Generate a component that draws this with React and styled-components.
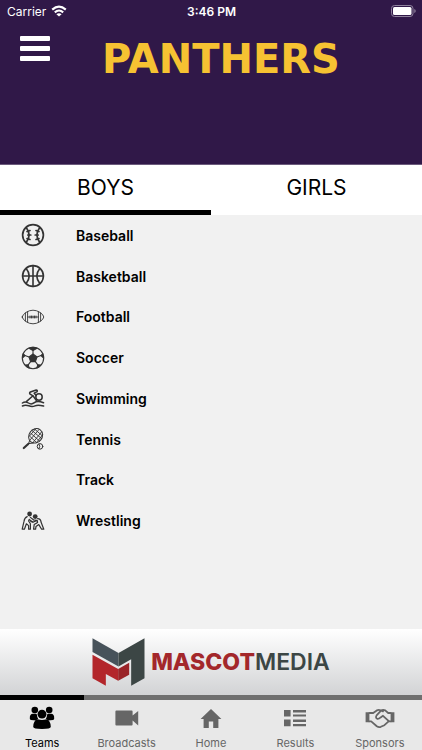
import React, { useState } from "react";
import styled, { createGlobalStyle } from "styled-components";

const purple = "#301848";

const stroke = {
  fill: "none",
  stroke: "currentColor",
  strokeLinecap: "round",
  strokeLinejoin: "round",
};

const BaseballIcon = () => (
  <svg viewBox="0 0 24 24" {...stroke} strokeWidth="1.7">
    <circle cx="12" cy="12" r="10.4" />
    <path d="M5.2 4.6Q11 12 5.2 19.4M18.8 4.6Q13 12 18.8 19.4" />
    <path d="M6 8.5l3-1M6.8 12h3M6 15.5l3 1M18 8.5l-3-1M17.2 12h-3M18 15.5l-3 1" />
  </svg>
);

const BasketballIcon = () => (
  <svg viewBox="0 0 24 24" {...stroke} strokeWidth="1.6">
    <circle cx="12" cy="12" r="10.4" />
    <path d="M12 1.6v20.8M1.6 12h20.8M5.2 4.6q6 7.4 0 14.8M18.8 4.6q-6 7.4 0 14.8" />
  </svg>
);

const FootballIcon = () => (
  <svg viewBox="0 0 24 24" {...stroke} strokeWidth="0.9">
    <path d="M1.200 12Q1.600 9.600 5 7.400T12 5.200t7 2.200 3.800 4.600q-.4 2.400-3.800 4.600T12 18.800t-7-2.200T1.200 12z" />
    <path d="M4.400 8v8M6.600 6.800v10.400M17.400 6.800v10.400M19.600 8v8M6.600 12h10.800" />
    <path d="M9 11v2M10.500 11v2M12 11v2M13.500 11v2M15 11v2" />
  </svg>
);

const SoccerIcon = () => (
  <svg viewBox="0 0 24 24" {...stroke} strokeWidth="1.100">
    <circle cx="12" cy="12" r="10.700" />
    <path d="M12 8V4.500M8 11L4 9.600M16 11l4-1.400M9.600 15.600l-2.400 3.200M14.400 15.600l2.400 3.200" />
    <g fill="currentColor">
      <path d="M12 8l4 3-1.600 4.600H9.600L8 11z" />
      <path d="M8 2.300Q12 .5 16 2.300l-4 2.200zM1.400 12l.8-4.400L4 9.600zM22.600 12l-.8-4.400L20 9.600zM4.200 19l3-.2 1 3.200Q6 21.200 4.200 19zM19.800 19l-3-.2-1 3.200q2.200-.8 4-3z" />
    </g>
  </svg>
);

const SwimmingIcon = () => (
  <svg viewBox="0 0 24 24" {...stroke} strokeWidth="1.500">
    <circle cx="18" cy="11" r="3.200" />
    <path d="M5.600 15.400l6.400-5.600-3.200-2q-.6-1.200.6-1.800l5.800-2q1.400.2 1 1.600l-3 1.600 1.800 2.200M12 9.800l3.400 4.800" />
    <path d="M1.400 17q3-2 6 0t6-.4 9.200.2M1.400 20q3-1.600 6.400-.2t6.200 0 8.600.2" />
  </svg>
);

const TennisIcon = () => (
  <svg viewBox="0 0 24 24" {...stroke} strokeWidth="1">
    <ellipse cx="14.600" cy="8.800" rx="6.600" ry="7.600" transform="rotate(38 14.600 8.800)" />
    <path
      d="M11 3.500l9.500 8M9.500 6l9 8M8.500 9l7 6.500M13.500 2l7.500 6.500M18 2.500L9 13M20.500 5L12 15.500M14.500 2L8.500 9M21.500 8l-6 7.500"
      strokeWidth="0.900"
    />
    <path d="M8.600 13.600l-1 3M12.400 16l-4.800.6" />
    <path d="M7.200 17l-4.400 4" strokeWidth="2.200" />
    <circle cx="19" cy="19.400" r="2.800" />
    <path d="M18 17.200q1.800 2.200 0 4.400" />
  </svg>
);

const WrestlingIcon = () => (
  <svg viewBox="0 0 24 24" {...stroke} strokeWidth="1.200">
    <g fill="currentColor" stroke="none">
      <circle cx="8.600" cy="5" r="2.400" />
      <circle cx="14.200" cy="7.600" r="2.400" />
    </g>
    <path d="M6.200 7.600Q3.400 8.800 3 12.400l-1.800 7.800h2.200l2-5.400 2.200 1.800v3.600h1.800v-5.400L7.600 12l.6-1.600 3.800 2.800M9.400 8.400l3 2.400" />
    <path d="M16.600 9.600q3.200.2 3.400 3.400l2.800 7.200h-2.200l-2.800-4.600-2.800 1.800-.4 2.800h-2l.6-4.600 3.400-2.200-.4-2-3.800 1.600-2.600-.4M13 11l3 .4" />
  </svg>
);

const TeamsIcon = () => (
  <svg width="26" height="24" viewBox="0 0 26 24" fill="currentColor">
    <circle cx="5.800" cy="4" r="3.300" />
    <circle cx="20.200" cy="4" r="3.300" />
    <path d="M.8 12.400Q.6 7.800 4 7.800h3q1 .2 1 1.400.1 2.200 1.200 3.400L7 14.400l-5-.4q-1.200-.4-1.200-1.600zM25.200 12.400q.2-4.600-3.200-4.600h-3q-1 .2-1 1.400-.1 2.200-1.200 3.400l2.200 1.800 5-.4q1.200-.4 1.200-1.600z" />
    <circle cx="13" cy="8.200" r="4.400" />
    <path d="M4.200 20.800Q4.400 14.200 8.600 13.200q4.400 1.600 8.800 0 4.200 1 4.400 7.600 0 2.200-8.800 2.200t-8.800-2.200z" />
  </svg>
);

const VideoIcon = () => (
  <svg width="26" height="24" viewBox="0 0 26 24" fill="currentColor">
    <path d="M2.400 4.400h15.200q1 0 1 1v4.200L24.200 5v14.400l-5.600-4.800v4q0 1-1 1H2.400q-1 0-1-1V5.400q0-1 1-1z" />
  </svg>
);

const HomeIcon = () => (
  <svg width="26" height="24" viewBox="0 0 26 24" fill="currentColor">
    <path d="M13 3L2.600 13h3v9h5.200v-6.400h4.400V22h5.200v-9h3z" />
  </svg>
);

const ResultsIcon = () => (
  <svg width="26" height="24" viewBox="0 0 26 24" fill="currentColor">
    <path d="M2 4h6.600v6.600H2zM2 13.600h6.600v6.600H2zM11 4h13v2.400H11zM11 8.400h13v2.200H11zM11 13.600h13V16H11zM11 18h13v2.200H11z" />
  </svg>
);

const SponsorsIcon = () => (
  <svg width="30" height="24" viewBox="0 0 30 24" {...stroke} strokeWidth="1.800">
    <path d="M.6 6.200h3.800v10H.6zM25.600 6.200h3.800v10h-3.800z" fill="currentColor" stroke="none" />
    <path d="M4.400 7h3.800l3.600-2.600q1.800-1 3.600-.2L18 5.400M25.600 7h-2.400l-3-2.600q-2.200-1.200-4.200.2l-4.400 4.800q-1.400 2.400.6 3.400 1.600.4 3.400-1.400l2.400-1.600 5.800 5.400" />
    <path d="M4.400 15.400h1.800l5.600 4.800q2 1.400 4 .6l3.600-1.600 4.200-3.800h2" />
  </svg>
);

const WifiIcon = () => (
  <svg width="16" height="12" viewBox="0 0 16 12" fill="none" stroke="currentColor" strokeWidth="2.100">
    <path d="M1.200 4.600q6.800-6 13.600 0M3.800 7.400q4.200-3.800 8.400 0" />
    <path d="M8 11.600L5.400 9.200q2.600-2 5.200 0z" fill="currentColor" stroke="none" />
  </svg>
);

const BatteryIcon = () => (
  <svg width="25" height="12" viewBox="0 0 25 12">
    <rect x="0.500" y="0.500" width="21.500" height="11" rx="3" fill="none" stroke="#8f829d" />
    <rect x="2" y="2" width="18.500" height="8" rx="1.500" fill="#fff" />
    <path d="M23.300 4v4q1.400-.6 1.400-2t-1.400-2z" fill="#8f829d" />
  </svg>
);

const MascotLogo = () => (
  <svg width="53" height="48" viewBox="34 42 158 144">
    <path d="M35 43l78 44v40.500L35 84z" fill="#47525a" />
    <path d="M191 43l-78 44v40.500l38-22V185l40-22z" fill="#3c4645" />
    <path d="M35 92l77 43v35l-37-20v35l-40-22z" fill="#b3262b" />
    <path d="M112 135l33-19v36l-33 18z" fill="#9a2428" />
  </svg>
);

const sports = [
  { name: "Baseball", icon: <BaseballIcon /> },
  { name: "Basketball", icon: <BasketballIcon /> },
  { name: "Football", icon: <FootballIcon /> },
  { name: "Soccer", icon: <SoccerIcon /> },
  { name: "Swimming", icon: <SwimmingIcon /> },
  { name: "Tennis", icon: <TennisIcon /> },
  { name: "Track", icon: null },
  { name: "Wrestling", icon: <WrestlingIcon /> },
];

const pages = [
  { name: "Teams", icon: <TeamsIcon /> },
  { name: "Broadcasts", icon: <VideoIcon /> },
  { name: "Home", icon: <HomeIcon /> },
  { name: "Results", icon: <ResultsIcon /> },
  { name: "Sponsors", icon: <SponsorsIcon /> },
];

function App() {
  const [group, setGroup] = useState("BOYS");
  const [page, setPage] = useState("Teams");

  return (
    <Screen>
      <GlobalStyle />
      <Header>
        <StatusBar>
          <Carrier>
            Carrier <WifiIcon />
          </Carrier>
          <Clock>3:46 PM</Clock>
          <Battery>
            <BatteryIcon />
          </Battery>
        </StatusBar>
        <TitleBar>
          <MenuButton aria-label="Menu">
            <MenuLine />
            <MenuLine />
            <MenuLine />
          </MenuButton>
          <TeamName>PANTHERS</TeamName>
        </TitleBar>
      </Header>
      <Tabs>
        {["BOYS", "GIRLS"].map((name) => (
          <Tab key={name} $active={group === name} onClick={() => setGroup(name)}>
            {name}
          </Tab>
        ))}
      </Tabs>
      <Content>
        <SportList>
          {sports.map((sport) => (
            <li key={sport.name}>
              <SportLink href="#">
                <SportIcon>{sport.icon}</SportIcon>
                {sport.name}
              </SportLink>
            </li>
          ))}
        </SportList>
      </Content>
      <Banner href="#">
        <MascotLogo />
        <BannerText>
          <strong>MASCOT</strong>MEDIA
        </BannerText>
      </Banner>
      <NavBar>
        {pages.map(({ name, icon }) => (
          <NavItem key={name} $active={page === name} onClick={() => setPage(name)}>
            <NavIcon>{icon}</NavIcon>
            {name}
          </NavItem>
        ))}
      </NavBar>
    </Screen>
  );
}

export default App;

const GlobalStyle = createGlobalStyle`
  * {
    box-sizing: border-box;
  }
  body {
    margin: 0;
    font-family: Inter, "Liberation Sans", sans-serif;
  }
  button {
    font-family: inherit;
    border: 0;
    padding: 0;
    background: none;
    cursor: pointer;
  }
  svg {
    display: block;
    flex-shrink: 0;
  }
`;

const Screen = styled.div`
  display: flex;
  flex-direction: column;
  min-height: 100vh;
  background-color: #f1f1f1;
`;

const Header = styled.header`
  height: 165px;
  background-color: ${purple};
  border-bottom: 1px solid #6b5a7c;
  color: #fff;
`;

const StatusBar = styled.div`
  display: grid;
  grid-template-columns: 1fr auto 1fr;
  align-items: center;
  height: 22px;
  padding: 0 6px 0 7px;
  font-size: 12px;
`;

const Carrier = styled.span`
  display: flex;
  align-items: center;
  gap: 5px;
`;

const Clock = styled.span`
  font-weight: 600;
`;

const Battery = styled.span`
  justify-self: end;
`;

const TitleBar = styled.div`
  display: grid;
  grid-template-columns: 30px 1fr 30px;
  align-items: start;
  padding: 14px 20px 0;
`;

const MenuButton = styled.button`
  display: flex;
  flex-direction: column;
  gap: 5px;
`;

const MenuLine = styled.span`
  width: 30px;
  height: 5px;
  border-radius: 1px;
  background-color: #fff;
`;

const TeamName = styled.h1`
  margin: 0;
  padding-left: 20px;
  text-align: center;
  font-family: "DejaVu Sans", sans-serif;
  font-size: 40px;
  font-weight: bold;
  line-height: 46px;
  color: #f6c232;
`;

const Tabs = styled.div`
  display: flex;
  background-color: #fff;
`;

const Tab = styled.button`
  flex: 1;
  height: 50px;
  border-bottom: 5px solid ${(props) => (props.$active ? "#000" : "transparent")};
  font-size: 21px;
  color: #000;
`;

const Content = styled.main`
  flex: 1;
`;

const SportList = styled.ul`
  display: grid;
  grid-auto-rows: 1fr;
  height: 326px;
  margin: 0;
  padding: 0;
  list-style: none;
`;

const SportLink = styled.a`
  display: flex;
  align-items: center;
  gap: 31px;
  height: 100%;
  padding: 0 21px;
  font-size: 14px;
  font-weight: 600;
  color: #000;
  text-decoration: none;
`;

const SportIcon = styled.span`
  width: 24px;
  height: 24px;
  color: #333;
`;

const Banner = styled.a`
  display: flex;
  align-items: center;
  justify-content: center;
  gap: 6px;
  height: 66px;
  background: linear-gradient(#ffffff, #d2d3d5);
  text-decoration: none;
`;

const BannerText = styled.span`
  font-size: 23px;
  font-weight: 600;
  color: #3c4645;

  strong {
    font-weight: 800;
    color: #a3272b;
  }
`;

const NavBar = styled.nav`
  display: flex;
  background-color: #e8e8e8;
`;

const NavItem = styled.button`
  flex: 1;
  display: flex;
  flex-direction: column;
  align-items: center;
  height: 55px;
  border-top: 5px solid ${(props) => (props.$active ? "#000" : "#6f6f6f")};
  font-size: 11px;
  line-height: 14px;
  color: ${(props) => (props.$active ? "#000" : "#666")};
`;

const NavIcon = styled.span`
  display: flex;
  align-items: center;
  height: 36px;
`;
